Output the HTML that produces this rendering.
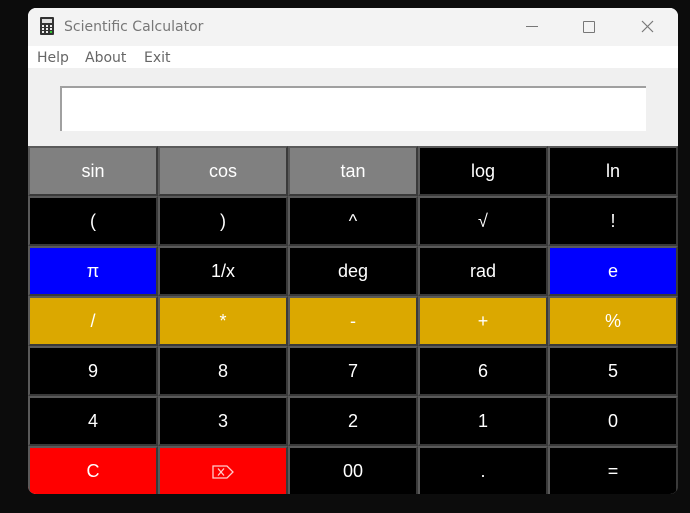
<!DOCTYPE html>
<html><head><style>
body{margin:0;width:690px;height:513px;background:#0c0c0c;position:relative;overflow:hidden;font-family:"Liberation Sans","DejaVu Sans",sans-serif}
.win{position:absolute;left:28px;top:8px;width:650px;height:486px;background:#f0f0f0;border-radius:8px;overflow:hidden}
.title{position:absolute;left:0;top:0;width:650px;height:38px;background:#f3f3f3}
.title .t{position:absolute;left:36px;top:11px;color:#777;font-family:"DejaVu Sans",sans-serif;font-size:14px}
.menu{position:absolute;left:0;top:38px;width:650px;height:22px;background:#fff;font-family:"DejaVu Sans",sans-serif;font-size:14px;color:#666}
.menu span{position:absolute;top:4px}
.entry{position:absolute;left:32px;top:78px;width:584px;height:43px;background:#fff;border-top:2px solid #a0a0a0;border-left:2px solid #a0a0a0}
.grid{position:absolute;left:0;top:138px;width:650px;height:348px}
.b{position:absolute;width:126px;height:46px;border:2px solid #3a3a3a;border-top-color:#5a5a5a;border-left-color:#5a5a5a;color:#fff;font-size:18px;text-align:center;line-height:46px;background:#000}
.g{background:#808080}.bl{background:#0000ff}.y{background:#dba800}.r{background:#ff0000}
</style></head><body>
<div class="win">
<div class="title">
<svg style="position:absolute;left:12px;top:9px" width="14" height="18" viewBox="0 0 14 18"><rect x="0" y="0" width="14" height="18" rx="1" fill="#333"/><rect x="2" y="2" width="10" height="4" fill="#ddd"/><g fill="#eee"><rect x="2" y="8" width="2" height="2"/><rect x="6" y="8" width="2" height="2"/><rect x="10" y="8" width="2" height="2"/><rect x="2" y="11" width="2" height="2"/><rect x="6" y="11" width="2" height="2"/><rect x="10" y="11" width="2" height="2"/><rect x="2" y="14" width="2" height="2"/><rect x="6" y="14" width="2" height="2"/></g><rect x="10" y="14" width="2" height="2" fill="#3c3"/></svg>
<div class="t">Scientific Calculator</div>
<div style="position:absolute;left:498px;top:18px;width:12px;height:1px;background:#777"></div>
<div style="position:absolute;left:555px;top:13px;width:10px;height:10px;border:1px solid #777;border-radius:1px"></div>
<svg style="position:absolute;left:613px;top:12px" width="13" height="13"><path d="M1 1L12 12M12 1L1 12" stroke="#777" stroke-width="1.2"/></svg>
</div>
<div class="menu"><span style="left:9px">Help</span><span style="left:57px">About</span><span style="left:116px">Exit</span></div>
<div class="entry"></div>
<div class="grid">
<div class="b g" style="left:0;top:0">sin</div><div class="b g" style="left:130px;top:0">cos</div><div class="b g" style="left:260px;top:0">tan</div><div class="b" style="left:390px;top:0">log</div><div class="b" style="left:520px;top:0">ln</div>
<div class="b" style="left:0;top:50px">(</div><div class="b" style="left:130px;top:50px">)</div><div class="b" style="left:260px;top:50px">^</div><div class="b" style="left:390px;top:50px">√</div><div class="b" style="left:520px;top:50px">!</div>
<div class="b bl" style="left:0;top:100px">π</div><div class="b" style="left:130px;top:100px">1/x</div><div class="b" style="left:260px;top:100px">deg</div><div class="b" style="left:390px;top:100px">rad</div><div class="b bl" style="left:520px;top:100px">e</div>
<div class="b y" style="left:0;top:150px">/</div><div class="b y" style="left:130px;top:150px">*</div><div class="b y" style="left:260px;top:150px">-</div><div class="b y" style="left:390px;top:150px">+</div><div class="b y" style="left:520px;top:150px">%</div>
<div class="b" style="left:0;top:200px">9</div><div class="b" style="left:130px;top:200px">8</div><div class="b" style="left:260px;top:200px">7</div><div class="b" style="left:390px;top:200px">6</div><div class="b" style="left:520px;top:200px">5</div>
<div class="b" style="left:0;top:250px">4</div><div class="b" style="left:130px;top:250px">3</div><div class="b" style="left:260px;top:250px">2</div><div class="b" style="left:390px;top:250px">1</div><div class="b" style="left:520px;top:250px">0</div>
<div class="b r" style="left:0;top:300px">C</div><div class="b r" style="left:130px;top:300px"><svg width="22" height="14" viewBox="0 0 22 14" style="vertical-align:middle"><path d="M1 1H15L21 7L15 13H1Z" fill="none" stroke="#fcc" stroke-width="1.3"/><path d="M6 3.5L12 10.5M12 3.5L6 10.5" stroke="#fcc" stroke-width="1.3"/></svg></div><div class="b" style="left:260px;top:300px">00</div><div class="b" style="left:390px;top:300px">.</div><div class="b" style="left:520px;top:300px">=</div>
</div>
</div>
</body></html>
